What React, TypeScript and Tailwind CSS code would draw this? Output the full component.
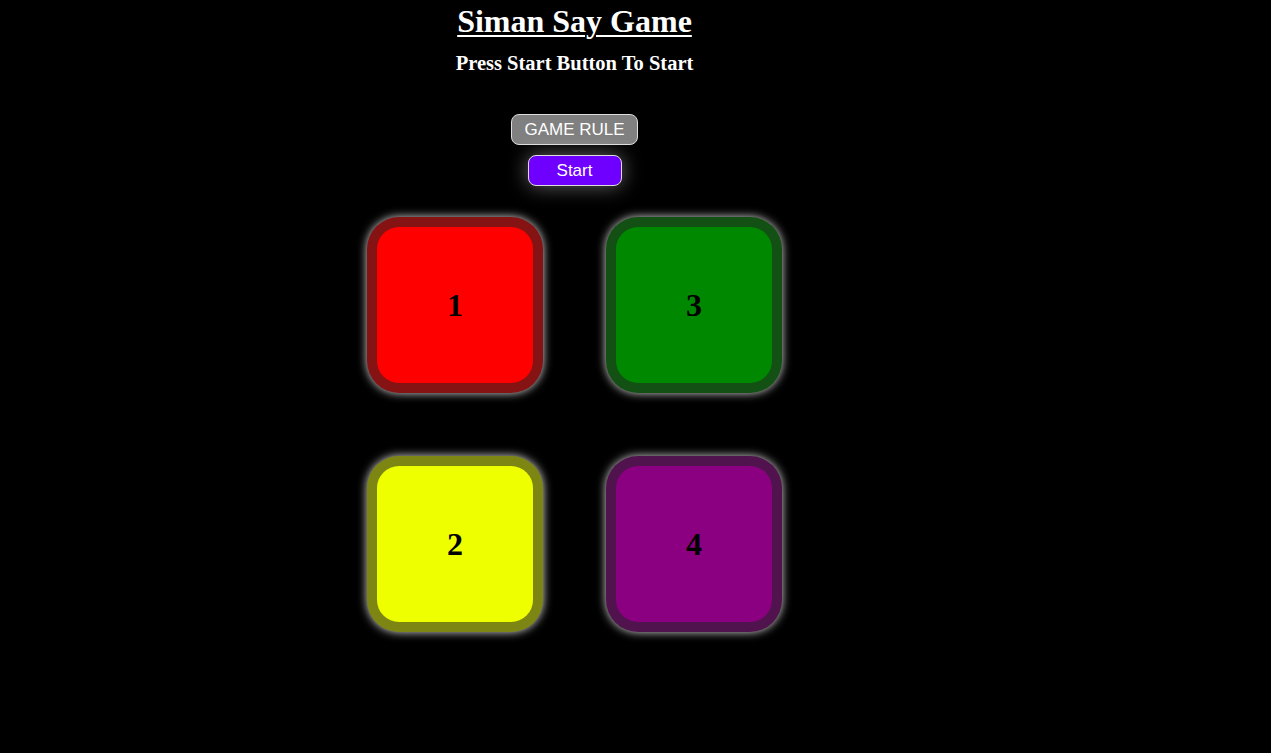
import React from 'react';

const boxes = [
  { n: 1, bg: 'bg-[#ff0000]' },
  { n: 3, bg: 'bg-[#008800]' },
  { n: 2, bg: 'bg-[#eeff00]' },
  { n: 4, bg: 'bg-[#8b0080]' },
];

export default function App() {
  return (
    <div className="min-h-[753px] w-full bg-black font-['Liberation_Serif',serif]">
      <div className="w-[1149px] flex flex-col items-center text-center">
        <h1 className="pt-[3px] text-[32px] leading-[37px] font-bold text-white underline decoration-2 underline-offset-[3px]">
          Siman Say Game
        </h1>
        <h3 className="mt-[11px] text-[20.5px] leading-[24px] font-bold text-white">
          Press Start Button To Start
        </h3>

        <button className="mt-[39px] h-[31px] px-3 rounded-lg border border-[#dddddd] bg-[#808080] text-white text-[17px] font-['Liberation_Sans',sans-serif]">
          GAME RULE
        </button>
        <button className="mt-[10px] h-[31px] w-[94px] rounded-lg border border-[#dddddd] bg-[#6f00ff] text-white text-[17px] font-['Liberation_Sans',sans-serif] shadow-[0_0_20px_rgba(255,255,255,0.4)]">
          Start
        </button>

        <div className="mt-[31px] grid grid-cols-2 gap-[63px]">
          {boxes.map((b) => (
            <div
              key={b.n}
              className={`w-[176px] h-[176px] rounded-[32px] border-[10px] border-[rgba(35,35,35,0.55)] ${b.bg} flex items-center justify-center shadow-[0_0_10px_rgba(255,255,255,0.85)]`}
            >
              <span className="text-[32px] font-bold text-black">{b.n}</span>
            </div>
          ))}
        </div>
      </div>
    </div>
  );
}
